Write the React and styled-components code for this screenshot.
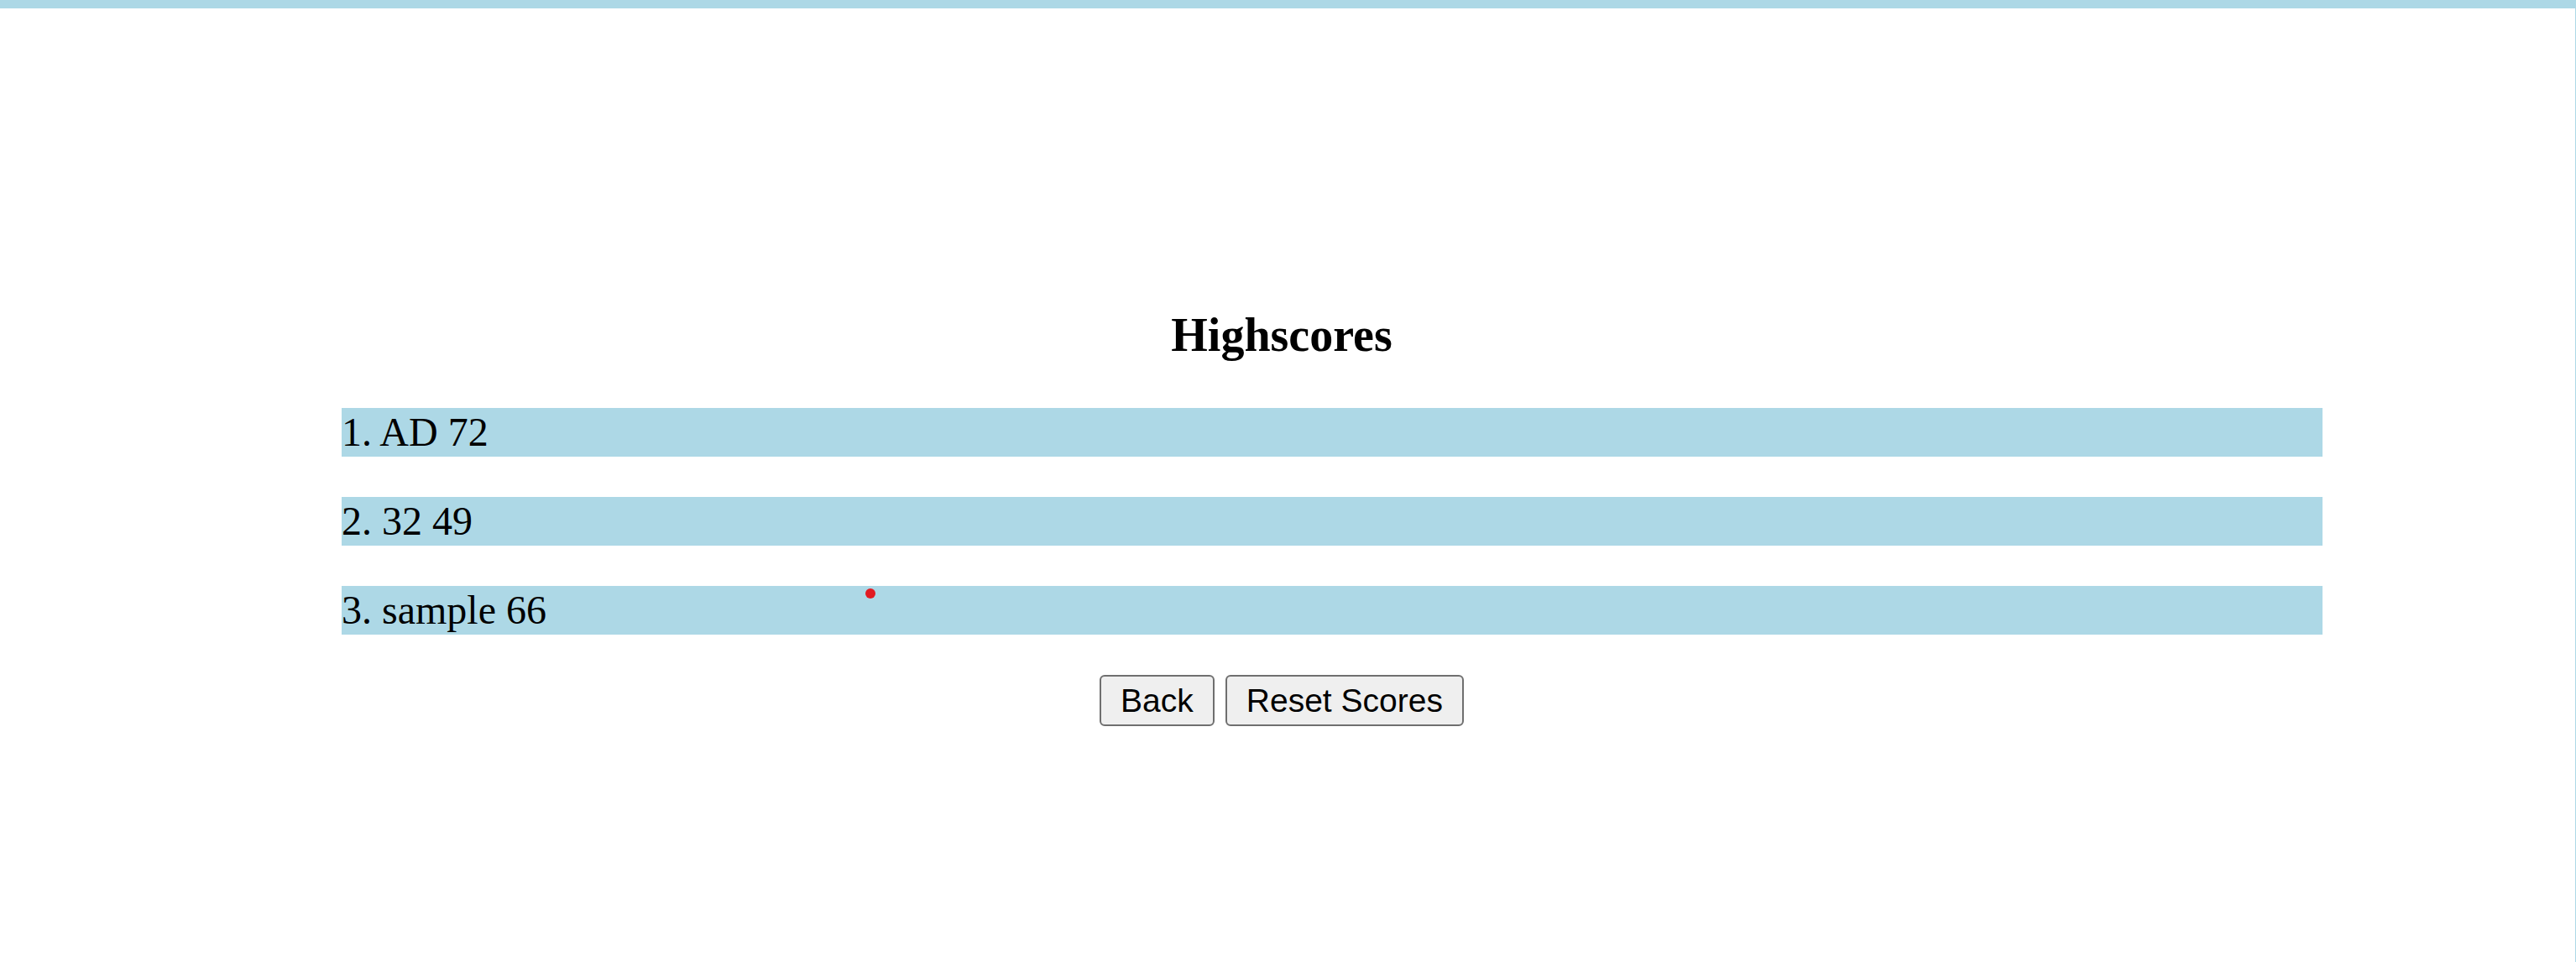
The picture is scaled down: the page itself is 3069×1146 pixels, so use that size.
import React from "react";
import styled, { createGlobalStyle } from "styled-components";

const GlobalStyle = createGlobalStyle`
  html, body {
    margin: 0;
    padding: 0;
    background: #ffffff;
  }
  body {
    font-family: "Liberation Serif", "Times New Roman", serif;
    color: #000000;
  }
`;

const Frame = styled.div`
  position: relative;
  box-sizing: border-box;
  width: 3069px;
  min-height: 100vh;
  border-top: 10px solid #add8e6;
  border-right: 1px solid #add8e6;
`;

const Content = styled.main`
  width: 3054px;
  padding-top: 357px;
  display: flex;
  flex-direction: column;
`;

const Title = styled.h2`
  margin: 0 0 55px;
  text-align: center;
  font-family: "Liberation Serif", "Times New Roman", serif;
  font-weight: bold;
  font-size: 56px;
  line-height: 64px;
`;

const ScoreList = styled.div`
  display: flex;
  flex-direction: column;
  gap: 48px;
  margin-left: 407px;
  width: 2360px;
`;

const ScoreRow = styled.p`
  margin: 0;
  height: 58px;
  background: #add8e6;
  font-family: "Liberation Serif", "Times New Roman", serif;
  font-size: 48px;
  line-height: 58px;
  white-space: pre;
`;

const Actions = styled.div`
  display: flex;
  justify-content: center;
  gap: 13px;
  margin-top: 48px;
`;

const Button = styled.button`
  box-sizing: border-box;
  height: 61px;
  padding: 0 23px;
  border: 2px solid #6f6f6f;
  border-radius: 6px;
  background: #efefef;
  color: #000000;
  font-family: "Liberation Sans", Arial, sans-serif;
  font-size: 39px;
  line-height: 46px;
  cursor: pointer;
`;

const Dot = styled.span`
  position: absolute;
  left: 1031px;
  top: 691px;
  width: 12px;
  height: 12px;
  border-radius: 50%;
  background: #e11b22;
`;

const scores = [
  { name: "AD", score: 72 },
  { name: "32", score: 49 },
  { name: "sample", score: 66 },
];

export default function App() {
  return (
    <>
      <GlobalStyle />
      <Frame>
        <Content>
          <Title>Highscores</Title>
          <ScoreList>
            {scores.map((s, i) => (
              <ScoreRow key={i}>{`${i + 1}. ${s.name} ${s.score}`}</ScoreRow>
            ))}
          </ScoreList>
          <Actions>
            <Button>Back</Button>
            <Button>Reset Scores</Button>
          </Actions>
        </Content>
        <Dot />
      </Frame>
    </>
  );
}
